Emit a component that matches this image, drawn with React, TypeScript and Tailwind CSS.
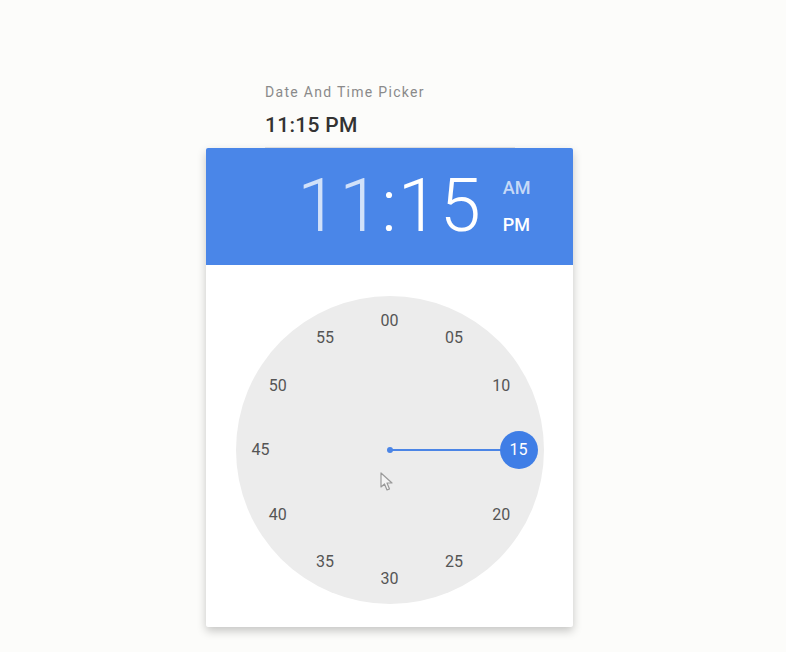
import React from "react";

const minutes = ["00", "05", "10", "15", "20", "25", "30", "35", "40", "45", "50", "55"];

const ClockFace = ({ selected }: { selected: number }) => {
    const size = 308;
    const r = 129;
    const c = size / 2;

    return (
        <div className="relative w-[308px] h-[308px] rounded-full bg-[#ececec]">
            {/* hand */}
            <div className="absolute left-[154px] top-[153px] w-[112px] h-[2px] bg-[#4b85e6]" />
            <div className="absolute left-[151px] top-[151px] w-[6px] h-[6px] rounded-full bg-[#4b85e6]" />
            <div className="absolute left-[264px] top-[135px] w-[38px] h-[38px] rounded-full bg-[#3f7ee6]" />

            {minutes.map((m, i) => {
                const a = (i * 30 * Math.PI) / 180;
                const x = c + r * Math.sin(a);
                const y = c - r * Math.cos(a);
                return (
                    <span
                        key={m}
                        className={
                            "absolute -translate-x-1/2 -translate-y-1/2 text-[16px] leading-none " +
                            (i === selected ? "text-white" : "text-[#555]")
                        }
                        style={{ left: x, top: y }}
                    >
                        {m}
                    </span>
                );
            })}

            {/* mouse pointer */}
            <svg className="absolute left-[144px] top-[176px]" width="14" height="20" viewBox="0 0 14 20">
                <path d="M1 1 L1 15 L4.5 12 L7 18 L9.5 17 L7 11 L12 11 Z" fill="#f4f4f4" stroke="#9a9a9a" strokeWidth="1.2" strokeLinejoin="round" />
            </svg>
        </div>
    );
};

const App = () => {
    return (
        <div className="w-full h-[652px] bg-[#fcfcfa] pt-[83px] font-['Roboto','Liberation_Sans',sans-serif]">
            <div className="ml-[206px] w-[367px]">
                <div className="pl-[59px]">
                    <p className="text-[14px] leading-[18px] tracking-[1.3px] text-[#8a8a8a]">Date And Time Picker</p>
                    <div className="w-[250px] border-b border-[#e6e6e6] pt-[11px] pb-[9px]">
                        <p className="text-[21px] leading-[26px] font-medium tracking-[0.3px] text-[#333]">11:15 PM</p>
                    </div>
                </div>

                <div className="bg-white rounded-[2px] shadow-[0_4px_10px_rgba(0,0,0,0.22)] overflow-hidden">
                    <div className="h-[117px] bg-[#4a86e8] grid grid-cols-[1fr_auto_1fr] items-center">
                        <div />
                        <div className="text-[74px] font-light leading-none tracking-[1px] text-white pb-[1px]">
                            <span className="text-white/75">11</span>
                            <span>:15</span>
                        </div>
                        <div className="flex flex-col gap-[17px] pl-[21px] text-[18px] leading-[20px] font-medium">
                            <span className="text-white/70">AM</span>
                            <span className="text-white">PM</span>
                        </div>
                    </div>

                    <div className="flex justify-center pt-[31px] pb-[23px]">
                        <ClockFace selected={3} />
                    </div>
                </div>
            </div>
        </div>
    );
};

export default App;
